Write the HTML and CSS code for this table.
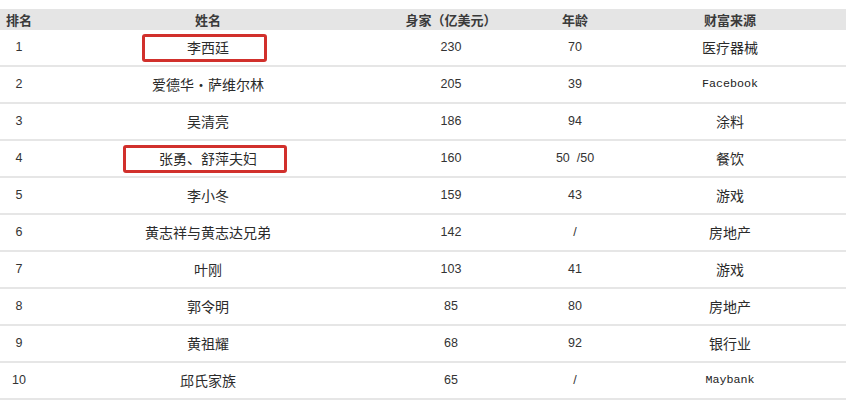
FILE: index.html
```html
<!DOCTYPE html>
<html lang="zh">
<head>
<meta charset="utf-8">
<title>富豪榜</title>
<link rel="stylesheet" href="styles.css">
</head>
<body>
<div class="wrap">
<table class="rank">
  <colgroup>
    <col class="c1"><col class="c2"><col class="c3"><col class="c4"><col class="c5"><col>
  </colgroup>
  <thead>
    <tr><th>排名</th><th>姓名</th><th>身家（亿美元）</th><th>年龄</th><th>财富来源</th><th></th></tr>
  </thead>
  <tbody>
    <tr><td class="num">1</td><td class="name">李西廷</td><td class="num">230</td><td class="num">70</td><td>医疗器械</td><td></td></tr>
    <tr><td class="num">2</td><td>爱德华・萨维尔林</td><td class="num">205</td><td class="num">39</td><td class="lat">Facebook</td><td></td></tr>
    <tr><td class="num">3</td><td>吴清亮</td><td class="num">186</td><td class="num">94</td><td>涂料</td><td></td></tr>
    <tr><td class="num">4</td><td>张勇、舒萍夫妇</td><td class="num">160</td><td class="num">50&nbsp;&nbsp;/50</td><td>餐饮</td><td></td></tr>
    <tr><td class="num">5</td><td>李小冬</td><td class="num">159</td><td class="num">43</td><td>游戏</td><td></td></tr>
    <tr><td class="num">6</td><td>黄志祥与黄志达兄弟</td><td class="num">142</td><td class="num">/</td><td>房地产</td><td></td></tr>
    <tr><td class="num">7</td><td>叶刚</td><td class="num">103</td><td class="num">41</td><td>游戏</td><td></td></tr>
    <tr><td class="num">8</td><td>郭令明</td><td class="num">85</td><td class="num">80</td><td>房地产</td><td></td></tr>
    <tr><td class="num">9</td><td>黄祖耀</td><td class="num">68</td><td class="num">92</td><td>银行业</td><td></td></tr>
    <tr><td class="num">10</td><td>邱氏家族</td><td class="num">65</td><td class="num">/</td><td class="lat">Maybank</td><td></td></tr>
  </tbody>
</table>
<div class="mark mark-a"></div>
<div class="mark mark-b"></div>
</div>
</body>
</html>
```

FILE: styles.css
```css
html, body {
  margin: 0;
  padding: 0;
  background: #fff;
}
body {
  font-family: "Noto Sans CJK SC", "Noto Sans", sans-serif;
  color: #333;
}
.wrap {
  position: relative;
  padding-top: 9px;
  width: 846px;
}
.rank {
  width: 846px;
  border-collapse: collapse;
  table-layout: fixed;
}
.c1 { width: 38px; }
.c2 { width: 340px; }
.c3 { width: 146px; }
.c4 { width: 102px; }
.c5 { width: 208px; }
.rank th {
  height: 21px;
  padding: 0;
  background: #e5e5e5;
  font-size: 13px;
  font-weight: 700;
  color: #3a3a3a;
  text-align: center;
  line-height: 21px;
}
.rank td {
  height: 35px;
  padding: 0;
  border-bottom: 2px solid #e6e6e6;
  font-size: 14px;
  text-align: center;
  line-height: 35px;
  color: #2b2b2b;
  white-space: nowrap;
}
.rank td.num {
  font-family: "Liberation Sans", sans-serif;
  font-size: 12.5px;
  color: #333;
}
.rank td.lat {
  font-family: "Liberation Mono", monospace;
  font-size: 11.7px;
  color: #222;
}
.mark {
  position: absolute;
  border: 3px solid #d1302c;
  border-radius: 3px;
  box-sizing: border-box;
}
.mark-a {
  left: 142px;
  top: 34px;
  width: 125px;
  height: 28px;
}
.mark-b {
  left: 123px;
  top: 145px;
  width: 164px;
  height: 28px;
}
```
